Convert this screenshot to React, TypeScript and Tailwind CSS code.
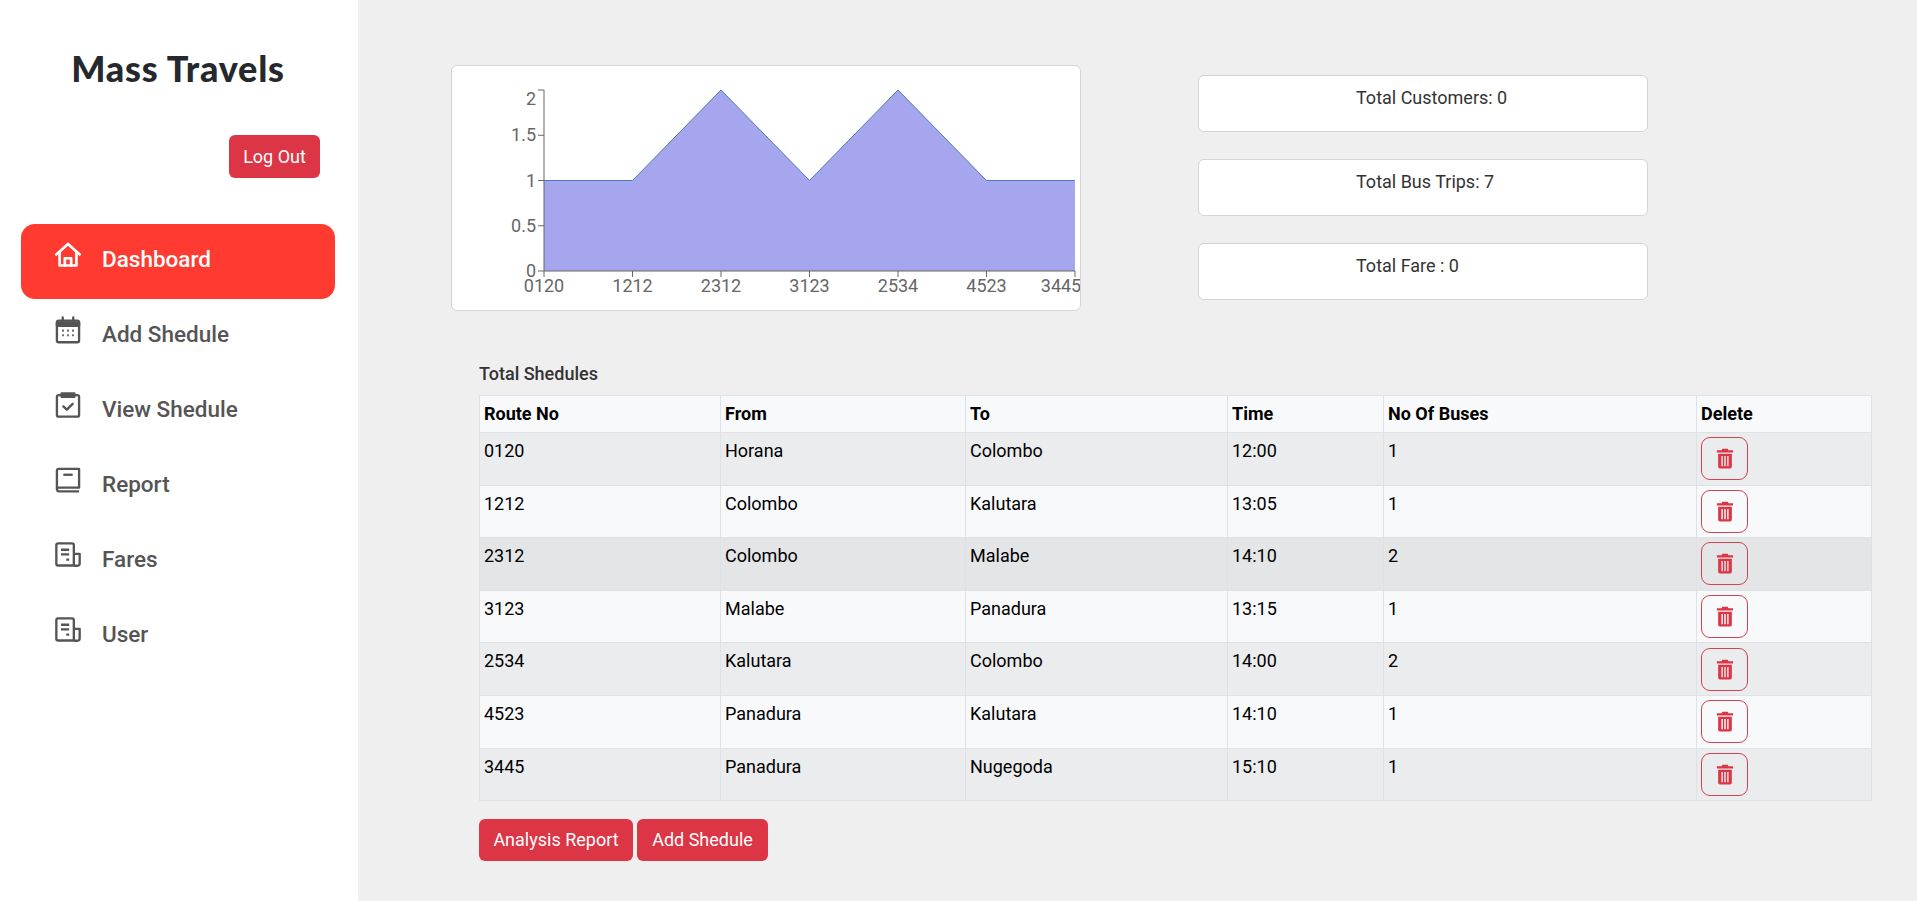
import React from 'react';

const rows = [
  { route: '0120', from: 'Horana', to: 'Colombo', time: '12:00', buses: 1, bg: 'bg-[#ebecee]' },
  { route: '1212', from: 'Colombo', to: 'Kalutara', time: '13:05', buses: 1, bg: 'bg-[#f8f9fb]' },
  { route: '2312', from: 'Colombo', to: 'Malabe', time: '14:10', buses: 2, bg: 'bg-[#e4e5e7]' },
  { route: '3123', from: 'Malabe', to: 'Panadura', time: '13:15', buses: 1, bg: 'bg-[#f8f9fb]' },
  { route: '2534', from: 'Kalutara', to: 'Colombo', time: '14:00', buses: 2, bg: 'bg-[#ebecee]' },
  { route: '4523', from: 'Panadura', to: 'Kalutara', time: '14:10', buses: 1, bg: 'bg-[#f8f9fb]' },
  { route: '3445', from: 'Panadura', to: 'Nugegoda', time: '15:10', buses: 1, bg: 'bg-[#ebecee]' },
];

const iconBase = {
  width: 28,
  height: 28,
  viewBox: '0 0 24 24',
  fill: 'none',
  stroke: 'currentColor',
  strokeWidth: 2,
  strokeLinecap: 'round' as const,
  strokeLinejoin: 'round' as const,
  className: 'mb-[9px] shrink-0',
};

const HomeIcon = () => (
  <svg {...iconBase} strokeWidth={2.3}>
    <path d="M2 11.5 12 2.5l10 9" />
    <path d="M4.8 9.5V21h14.4V9.5" />
    <path d="M9.3 21v-6.2h5.4V21" />
  </svg>
);

const CalendarIcon = () => (
  <svg {...iconBase}>
    <rect x="2.5" y="4" width="19" height="18.5" rx="1.5" />
    <path d="M2.5 5.5h19V8.5h-19z" fill="currentColor" />
    <path d="M7.5 1.2V4M16.5 1.2V4" />
    <path d="M7 12.5h1.4M11.3 12.5h1.4M15.6 12.5h1.4M7 16.5h1.4M11.3 16.5h1.4M15.6 16.5h1.4" strokeWidth="1.8" strokeLinecap="butt" />
  </svg>
);

const ClipboardIcon = () => (
  <svg {...iconBase}>
    <rect x="2.5" y="3.5" width="19" height="18.5" rx="1.5" />
    <path d="M6.5 2h11v3h-11z" fill="currentColor" />
    <path d="M8 13.2l3 2.8 5-5" />
  </svg>
);

const BookIcon = () => (
  <svg {...iconBase}>
    <path d="M2.5 20V4.2A1.7 1.7 0 0 1 4.2 2.5h17.3v16H4.2a1.9 1.9 0 0 0-1.7 1.6 1.9 1.9 0 0 0 1.7 1.6h17.3" strokeLinecap="butt" />
    <path d="M8 7.5h8" strokeLinecap="butt" />
  </svg>
);

const NewsIcon = () => (
  <svg {...iconBase}>
    <path d="M17 21H3.5A1.5 1.5 0 0 1 2 19.5v-16A1.5 1.5 0 0 1 3.5 2h12A1.5 1.5 0 0 1 17 3.5V21a2 2 0 0 0 2 0 2 2 0 0 0 3-1.5V11h-5" />
    <path d="M6 7.5h7M6 11.5h7M10.5 16h2.5" strokeLinecap="butt" />
  </svg>
);

const TrashIcon = () => (
  <svg width="18" height="21" viewBox="0 0 20 22" fill="currentColor" preserveAspectRatio="none">
    <path d="M7 0.8h6l0.8 1.5H19v2.4H1V2.3h5.2z" />
    <path fillRule="evenodd" d="M2.4 6h15.2v13.5a2 2 0 0 1-2 2H4.4a2 2 0 0 1-2-2zM6 8.5v10.5h1.6V8.5zM9.2 8.5v10.5h1.6V8.5zM12.4 8.5v10.5H14V8.5z" />
  </svg>
);

const nav = [
  { label: 'Dashboard', icon: HomeIcon },
  { label: 'Add Shedule', icon: CalendarIcon },
  { label: 'View Shedule', icon: ClipboardIcon },
  { label: 'Report', icon: BookIcon },
  { label: 'Fares', icon: NewsIcon },
  { label: 'User', icon: NewsIcon },
];

const Chart = () => {
  const left = 92;
  const top = 24;
  const w = 531;
  const h = 181;
  const pts = [1, 1, 2, 1, 2, 1, 1].map((v, i) => [left + (w / 6) * i, top + h - (v / 2) * h]);
  const line = pts.map((p) => p.join(',')).join(' ');
  const yLabelOffset = [15, 6, 6, 6, 6];
  return (
    <svg width="628" height="244" className="block">
      <polygon points={`${left},${top + h} ${line} ${left + w},${top + h}`} fill="#a5a6ee" />
      <polyline points={line} fill="none" stroke="#4f79bd" strokeWidth="1" />
      <path d={`M${left} ${top}V${top + h}H${left + w}`} fill="none" stroke="#666" />
      {['2', '1.5', '1', '0.5', '0'].map((t, i) => (
        <g key={t}>
          <path d={`M${left - 6} ${top + (i * h) / 4}H${left}`} stroke="#666" />
          <text x={left - 8} y={top + (i * h) / 4 + yLabelOffset[i]} textAnchor="end" fontSize="18" fill="#666">{t}</text>
        </g>
      ))}
      {rows.map((r, i) => (
        <g key={r.route}>
          <path d={`M${left + (w / 6) * i} ${top + h}v6`} stroke="#666" />
          <text x={i === 6 ? 609 : left + (w / 6) * i} y={top + h + 21} textAnchor="middle" fontSize="18" fill="#666">{r.route}</text>
        </g>
      ))}
    </svg>
  );
};

export default function App() {
  return (
    <div className="flex min-h-[901px] font-['Roboto',sans-serif] bg-[#efefef]">
      <aside className="w-[358px] shrink-0 bg-white pl-[21px] pr-[23px]">
        <h1 className="mt-[48px] text-center font-['Lato',sans-serif] text-[36px] leading-[40px] font-black tracking-[0.8px] text-[#25282c]">Mass Travels</h1>
        <div className="mt-[47px] flex justify-end pr-[15px]">
          <button className="h-[43px] w-[91px] rounded-[6px] bg-[#dc3545] text-[18px] text-white">Log Out</button>
        </div>
        <nav className="mt-[46px] flex flex-col">
          {nav.map((n, i) => (
            <div key={n.label} className={`flex h-[75px] items-center gap-[20px] rounded-[14px] pb-[4px] pl-[33px] text-[22.5px] font-medium ${i === 0 ? 'bg-[#ff3a30] text-white' : 'text-[#555555]'}`}>
              <n.icon />
              <span>{n.label}</span>
            </div>
          ))}
        </nav>
      </aside>
      <main className="flex-1 pt-[65px]">
        <div className="flex pl-[93px]">
          <div className="h-[246px] w-[630px] overflow-hidden rounded-[6px] border border-[#d5d5d5] bg-white">
            <Chart />
          </div>
          <div className="ml-[117px] flex w-[450px] flex-col gap-[27px] pt-[10px]">
            {['Total Customers: 0', 'Total Bus Trips: 7', 'Total Fare : 0'].map((s) => (
              <div key={s} className="h-[57px] rounded-[6px] border border-[#d5d5d5] bg-white pl-[157px] pt-[9px] text-[18px] leading-[26px] text-[#333]">{s}</div>
            ))}
          </div>
        </div>
        <div className="ml-[121px] mr-[45px] mt-[51px]">
          <p className="mb-[9px] text-[18px] font-medium leading-[24px] text-[#333]">Total Shedules</p>
          <table className="w-full table-fixed border-collapse text-[18px] text-black">
            <thead>
              <tr className="h-[37px] bg-[#f8f9fb] text-left">
                {[['Route No', 'w-[241px]'], ['From', 'w-[245px]'], ['To', 'w-[262px]'], ['Time', 'w-[156px]'], ['No Of Buses', 'w-[313px]'], ['Delete', '']].map(([t, w]) => (
                  <th key={t} className={`border border-[#dee2e6] px-[4px] pb-[2px] font-bold ${w}`}>{t}</th>
                ))}
              </tr>
            </thead>
            <tbody>
              {rows.map((r) => (
                <tr key={r.route} className={`h-[52.6px] ${r.bg}`}>
                  {[r.route, r.from, r.to, r.time, r.buses].map((c, i) => (
                    <td key={i} className="border border-[#dee2e6] px-[4px] pt-[4px] align-top leading-[27px]">{c}</td>
                  ))}
                  <td className="border border-[#dee2e6] px-[4px] align-middle">
                    <button className="flex h-[43px] w-[47px] items-center justify-center rounded-[9px] border border-[#cf4356] text-[#dc3545]">
                      <TrashIcon />
                    </button>
                  </td>
                </tr>
              ))}
            </tbody>
          </table>
          <div className="mt-[18px] flex gap-[4px]">
            <button className="h-[42px] w-[154px] rounded-[6px] bg-[#dc3545] pb-[2px] text-[18px] text-white">Analysis Report</button>
            <button className="h-[42px] w-[131px] rounded-[6px] bg-[#dc3545] pb-[2px] text-[18px] text-white">Add Shedule</button>
          </div>
        </div>
      </main>
    </div>
  );
}
